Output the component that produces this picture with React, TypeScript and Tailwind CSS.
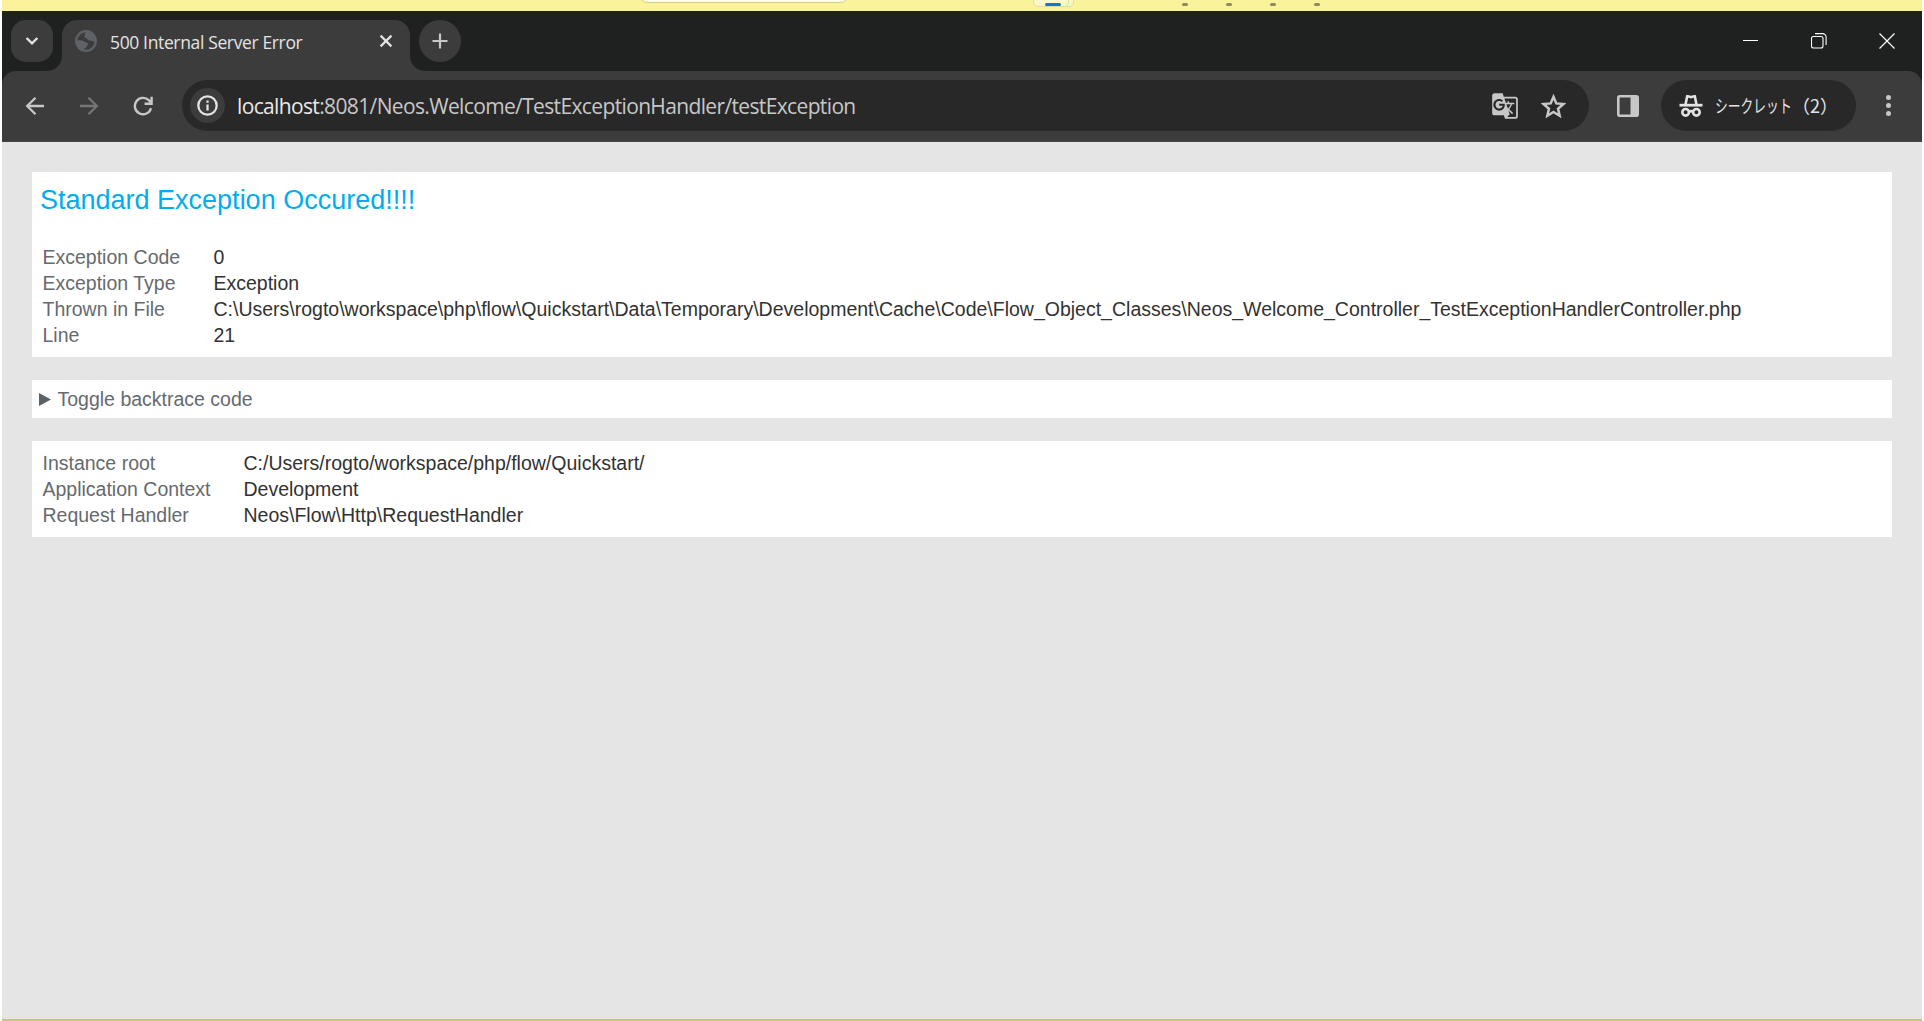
import { MdGTranslate } from "react-icons/md";

const exceptionRows = [
  ["Exception Code", "0"],
  ["Exception Type", "Exception"],
  [
    "Thrown in File",
    "C:\\Users\\rogto\\workspace\\php\\flow\\Quickstart\\Data\\Temporary\\Development\\Cache\\Code\\Flow_Object_Classes\\Neos_Welcome_Controller_TestExceptionHandlerController.php",
  ],
  ["Line", "21"],
];

const instanceRows = [
  ["Instance root", "C:/Users/rogto/workspace/php/flow/Quickstart/"],
  ["Application Context", "Development"],
  ["Request Handler", "Neos\\Flow\\Http\\RequestHandler"],
];

function Desktop() {
  return (
    <div className="relative h-[11px] overflow-hidden bg-[#faf39c]">
      <div className="absolute -top-5 left-[636px] h-[23px] w-[212px] rounded-[10px] border border-[#d6cf86] bg-[#fffde6]" />
      <div className="absolute -top-5 left-[1034px] h-[27px] w-[38px] rounded-[5px] border border-[#e6dc9a] bg-[#fdf7c8]" />
      <div className="absolute -top-5 left-[1031px] h-[27px] w-[36px] rounded-[5px] border border-[#e6dc9a] bg-[#fdf7cc]" />
      <div className="absolute top-[3px] left-[1043px] h-[3px] w-4 rounded-full bg-[#0a78d0]" />
      <div className="absolute top-[3px] left-[1180px] flex gap-[38px]">
        <div className="h-[3px] w-1.5 rounded-full bg-[#8f8a58]" />
        <div className="h-[3px] w-1.5 rounded-full bg-[#8f8a58]" />
        <div className="h-[3px] w-1.5 rounded-full bg-[#8f8a58]" />
        <div className="h-[3px] w-1.5 rounded-full bg-[#8f8a58]" />
      </div>
    </div>
  );
}

function TabStrip() {
  return (
    <div className="flex h-[60px] bg-[#1f2120] pt-[9px]">
      <button className="ml-[9px] flex size-[42px] items-center justify-center rounded-[15px] bg-[#3c3c3c]">
        <svg width="16" height="12" viewBox="0 0 16 12" fill="none" stroke="#e3e3e3" strokeWidth="2.4">
          <path d="M2.6 3 8 8.4 13.4 3" />
        </svg>
      </button>

      <div className="relative ml-[9px] flex h-[51px] w-[348px] rounded-t-[15px] bg-[#3c3c3c] pl-[13px]">
        <svg className="absolute bottom-0 -left-[15px]" width="15" height="15" viewBox="0 0 15 15">
          <path d="M15 0v15H0A15 15 0 0 0 15 0Z" fill="#3c3c3c" />
        </svg>
        <svg className="absolute -right-[15px] bottom-0" width="15" height="15" viewBox="0 0 15 15">
          <path d="M0 0v15h15A15 15 0 0 1 0 0Z" fill="#3c3c3c" />
        </svg>
        <svg className="mt-[10px]" width="22" height="22" viewBox="0 0 22 22">
          <circle cx="11" cy="11" r="9.8" fill="none" stroke="#5f6368" strokeWidth="2.2" />
          <path
            d="M12 1.5c-2 1-2.6 2-2.2 3.2.4 1-.6 1.4-.4 2.4.3 1.2 2.2.8 2.8 1.8.7 1.2 2 1.6 3.4 1.5 1.6 0 2 1.4 4.6 1.2A9.5 9.5 0 0 0 12 1.5Z"
            fill="#5f6368"
          />
          <path
            d="M1.4 10.6c2.2-.5 4.6-.4 6.4.2 1.8.6 2.2 1.8 3.8 2 1.6.3 1.8 1.7.8 2.6-1 .8-.8 2.2-2.2 2.5-1 .2-1.2 1.4-1.2 2.6A9.8 9.8 0 0 1 1.4 10.6Z"
            fill="#5f6368"
          />
        </svg>
        <span className="mt-[9px] ml-[13px] w-[256px] font-['Open_Sans','Noto_Sans',sans-serif] text-[17.5px] leading-[26px] tracking-[-0.36px] whitespace-nowrap text-[#e3e3e3]">
          500 Internal Server Error
        </span>
        <svg className="mt-[14px] ml-[13px]" width="14" height="14" viewBox="0 0 14 14" stroke="#e3e3e3" strokeWidth="2.2">
          <path d="M1.6 1.6 12.4 12.4M12.4 1.6 1.6 12.4" />
        </svg>
      </div>

      <button className="ml-[9px] flex size-[42px] items-center justify-center rounded-full bg-[#3c3c3c]">
        <svg width="16" height="16" viewBox="0 0 16 16" stroke="#c7c7c7" strokeWidth="2.2">
          <path d="M8 .5v15M.5 8h15" />
        </svg>
      </button>

      <div className="mt-[13px] mr-[27px] ml-auto flex h-4 text-white">
        <svg width="16" height="16" viewBox="0 0 16 16" stroke="currentColor">
          <path d="M0 7.5h15" />
        </svg>
        <svg className="ml-[52px]" width="16" height="16" viewBox="0 0 16 16" fill="none" stroke="currentColor" strokeWidth="1.1">
          <rect x=".5" y="3.5" width="11.5" height="11.5" rx="2" />
          <path d="M4 .6h7.5a3.6 3.6 0 0 1 3.6 3.6V12" />
        </svg>
        <svg className="ml-[52px]" width="16" height="16" viewBox="0 0 16 16" stroke="currentColor" strokeWidth="1.2">
          <path d="m.5.5 15 15M15.5.5l-15 15" />
        </svg>
      </div>
    </div>
  );
}

function Toolbar() {
  return (
    <div className="bg-[#1f2120]">
      <div className="flex h-[71px] items-start rounded-t-[14px] border-b border-[#474747] bg-[#3c3c3c] pt-[9px]">
        <div className="flex h-[51px] items-center gap-[34px] pl-[23px]">
          <svg width="20" height="20" viewBox="0 0 20 20" fill="none" stroke="#c7c7c7" strokeWidth="2.3">
            <path d="M19 10H2.5M10.5 1.7 2.2 10l8.3 8.3" />
          </svg>
          <svg width="20" height="20" viewBox="0 0 20 20" fill="none" stroke="#757575" strokeWidth="2.3">
            <path d="M1 10h16.5M9.5 1.7l8.3 8.3-8.3 8.3" />
          </svg>
          <svg width="20" height="20" viewBox="0 0 20 20" fill="none" stroke="#c7c7c7" strokeWidth="2.4">
            <path d="M18 12.2A8.2 8.2 0 1 1 16 4.4L18.5 7M18.6.8v7h-7" />
          </svg>
        </div>

        <div className="ml-[29px] flex h-[51px] w-[1407px] items-center rounded-full bg-[#282828] pl-2">
          <div className="flex size-[35px] items-center justify-center rounded-full bg-[#3c3c3c]">
            <svg width="21" height="21" viewBox="0 0 21 21" fill="none" stroke="#e3e3e3">
              <circle cx="10.5" cy="10.5" r="9.2" strokeWidth="2.3" />
              <path d="M10.5 9.5v6M10.5 5.5v2.3" strokeWidth="2.3" />
            </svg>
          </div>
          <div className="ml-3 font-['Open_Sans','Noto_Sans',sans-serif] text-[21px] leading-[30px] tracking-[-0.64px] whitespace-nowrap text-[#c7c7c7]">
            <span className="text-[#e8e8e8]">localhost</span>:8081/Neos.Welcome/TestExceptionHandler/testException
          </div>
          <div className="mr-[23px] ml-auto flex items-center gap-[22px] text-[#c7c7c7]">
            <MdGTranslate size={28} />
            <svg width="25" height="24" viewBox="1.5 1.5 21 20" fill="none" stroke="currentColor" strokeWidth="2.5">
              <path
                transform="translate(12 12.4) scale(.84) translate(-12 -12.3)"
                d="M12 17.27 18.18 21l-1.64-7.03L22 9.24l-7.19-.61L12 2 9.19 8.63 2 9.24l5.46 4.73L5.82 21Z"
              />
            </svg>
          </div>
        </div>

        <div className="ml-[28px] flex h-[51px] items-center">
          <svg width="22" height="22" viewBox="0 0 22 22" fill="none" stroke="#c7c7c7" strokeWidth="2.6">
            <rect x="1.3" y="1.3" width="19.4" height="19.4" rx="1.5" />
            <path d="M13.5 1.5h7v19h-7z" fill="#c7c7c7" stroke="none" />
          </svg>
        </div>

        <div className="ml-[22px] flex h-[51px] w-[195px] items-center rounded-full bg-[#282828] pl-[18px] text-[#e3e3e3]">
          <svg width="24" height="24" viewBox="0 0 24 24" fill="none" stroke="currentColor" strokeWidth="2.6">
            <path d="M.5 11.2h23" strokeWidth="2.8" />
            <path d="M6.4 11 8.2 2.3c1.6-.6 2.4.8 3.8.8s2.2-1.4 3.8-.8L17.6 11" />
            <circle cx="6.6" cy="18.3" r="3.3" />
            <circle cx="17.4" cy="18.3" r="3.3" />
            <path d="M9.8 17.8q2.2-1.3 4.4 0" />
          </svg>
          <div className="mb-px ml-3 flex font-['Noto_Sans_CJK_JP',sans-serif] text-[18px] leading-[26px] whitespace-nowrap">
            <span className="w-[77px] origin-left scale-x-[0.71]">シークレット</span>
            <span>（2）</span>
          </div>
        </div>

        <div className="ml-[30px] flex h-[51px] flex-col items-center justify-center gap-[3px]">
          <div className="size-[5px] rounded-full bg-[#c7c7c7]" />
          <div className="size-[5px] rounded-full bg-[#c7c7c7]" />
          <div className="size-[5px] rounded-full bg-[#c7c7c7]" />
        </div>
      </div>
    </div>
  );
}

export default function App() {
  return (
    <div className="h-[1021px] w-[1924px] overflow-hidden bg-white px-0.5">
      <Desktop />
      <TabStrip />
      <Toolbar />
      <main className="h-[877px] bg-[#e5e5e5] px-[30px] pt-[30px] font-['Liberation_Sans',Arial,sans-serif] text-[19.5px] leading-[26px] text-[#666a6e]">
        <section className="mb-[23px] h-[185px] bg-white px-[10.5px] pt-[10px]">
          <h1 className="mb-[26px] -ml-[2.5px] text-[27px] leading-[36px] text-[#00adee]">
            Standard Exception Occured!!!!
          </h1>
          <dl className="grid grid-cols-[171px_1fr]">
            {exceptionRows.map(([label, value]) => (
              <div key={label} className="contents">
                <dt>{label}</dt>
                <dd className="whitespace-nowrap text-[#323232]">{value}</dd>
              </div>
            ))}
          </dl>
        </section>

        <section className="mb-[23px] flex h-[38px] items-center bg-white pl-[7px]">
          <svg width="12" height="13" viewBox="0 0 12 13" fill="#5c6166">
            <path d="M0 0v13l12-6.5z" />
          </svg>
          <span className="ml-[6.5px]">Toggle backtrace code</span>
        </section>

        <section className="h-[96px] bg-white px-[10.5px] py-[9px]">
          <dl className="grid grid-cols-[201px_1fr]">
            {instanceRows.map(([label, value]) => (
              <div key={label} className="contents">
                <dt>{label}</dt>
                <dd className="text-[#323232]">{value}</dd>
              </div>
            ))}
          </dl>
        </section>
      </main>
      <div className="h-0.5 bg-[#c8c380]" />
    </div>
  );
}
